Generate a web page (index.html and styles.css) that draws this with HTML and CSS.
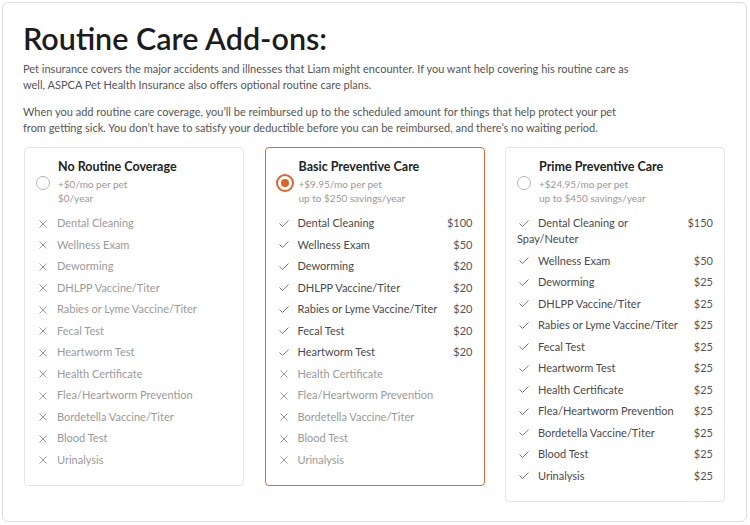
FILE: index.html
```html
<!DOCTYPE html>
<html>
<head>
<meta charset="utf-8">
<link rel="stylesheet" href="styles.css">
</head>
<body>
<div class="page">
  <h1 class="title">Routine Care Add-ons:</h1>
  <p class="intro">Pet insurance covers the major accidents and illnesses that Liam might encounter. If you want help covering his routine care as well, ASPCA Pet Health Insurance also offers optional routine care plans.</p>
  <p class="intro">When you add routine care coverage, you’ll be reimbursed up to the scheduled amount for things that help protect your pet from getting sick. You don’t have to satisfy your deductible before you can be reimbursed, and there’s no waiting period.</p>

  <div class="plans">
    <div class="plan">
      <div class="plan-head">
        <span class="radio"></span>
        <div class="plan-info">
          <div class="plan-name">No Routine Coverage</div>
          <div class="plan-sub">+$0/mo per pet</div>
          <div class="plan-sub">$0/year</div>
        </div>
      </div>
      <ul class="items">
        <li class="item off"><span class="label"><svg class="ic" width="21" height="8" viewBox="0 0 21 8"><path d="M3.5 0.5 L10.5 7.5 M10.5 0.5 L3.5 7.5"/></svg>Dental Cleaning</span></li>
        <li class="item off"><span class="label"><svg class="ic" width="21" height="8" viewBox="0 0 21 8"><path d="M3.5 0.5 L10.5 7.5 M10.5 0.5 L3.5 7.5"/></svg>Wellness Exam</span></li>
        <li class="item off"><span class="label"><svg class="ic" width="21" height="8" viewBox="0 0 21 8"><path d="M3.5 0.5 L10.5 7.5 M10.5 0.5 L3.5 7.5"/></svg>Deworming</span></li>
        <li class="item off"><span class="label"><svg class="ic" width="21" height="8" viewBox="0 0 21 8"><path d="M3.5 0.5 L10.5 7.5 M10.5 0.5 L3.5 7.5"/></svg>DHLPP Vaccine/Titer</span></li>
        <li class="item off"><span class="label"><svg class="ic" width="21" height="8" viewBox="0 0 21 8"><path d="M3.5 0.5 L10.5 7.5 M10.5 0.5 L3.5 7.5"/></svg>Rabies or Lyme Vaccine/Titer</span></li>
        <li class="item off"><span class="label"><svg class="ic" width="21" height="8" viewBox="0 0 21 8"><path d="M3.5 0.5 L10.5 7.5 M10.5 0.5 L3.5 7.5"/></svg>Fecal Test</span></li>
        <li class="item off"><span class="label"><svg class="ic" width="21" height="8" viewBox="0 0 21 8"><path d="M3.5 0.5 L10.5 7.5 M10.5 0.5 L3.5 7.5"/></svg>Heartworm Test</span></li>
        <li class="item off"><span class="label"><svg class="ic" width="21" height="8" viewBox="0 0 21 8"><path d="M3.5 0.5 L10.5 7.5 M10.5 0.5 L3.5 7.5"/></svg>Health Certificate</span></li>
        <li class="item off"><span class="label"><svg class="ic" width="21" height="8" viewBox="0 0 21 8"><path d="M3.5 0.5 L10.5 7.5 M10.5 0.5 L3.5 7.5"/></svg>Flea/Heartworm Prevention</span></li>
        <li class="item off"><span class="label"><svg class="ic" width="21" height="8" viewBox="0 0 21 8"><path d="M3.5 0.5 L10.5 7.5 M10.5 0.5 L3.5 7.5"/></svg>Bordetella Vaccine/Titer</span></li>
        <li class="item off"><span class="label"><svg class="ic" width="21" height="8" viewBox="0 0 21 8"><path d="M3.5 0.5 L10.5 7.5 M10.5 0.5 L3.5 7.5"/></svg>Blood Test</span></li>
        <li class="item off"><span class="label"><svg class="ic" width="21" height="8" viewBox="0 0 21 8"><path d="M3.5 0.5 L10.5 7.5 M10.5 0.5 L3.5 7.5"/></svg>Urinalysis</span></li>
      </ul>
    </div>

    <div class="plan selected">
      <div class="plan-head">
        <span class="radio checked"></span>
        <div class="plan-info">
          <div class="plan-name">Basic Preventive Care</div>
          <div class="plan-sub">+$9.95/mo per pet</div>
          <div class="plan-sub">up to $250 savings/year</div>
        </div>
      </div>
      <ul class="items">
        <li class="item"><span class="label"><svg class="ic" width="21" height="8" viewBox="0 0 21 8"><path d="M2.5 3.5 L5.5 6.5 L11.5 0.5"/></svg>Dental Cleaning</span><span class="price">$100</span></li>
        <li class="item"><span class="label"><svg class="ic" width="21" height="8" viewBox="0 0 21 8"><path d="M2.5 3.5 L5.5 6.5 L11.5 0.5"/></svg>Wellness Exam</span><span class="price">$50</span></li>
        <li class="item"><span class="label"><svg class="ic" width="21" height="8" viewBox="0 0 21 8"><path d="M2.5 3.5 L5.5 6.5 L11.5 0.5"/></svg>Deworming</span><span class="price">$20</span></li>
        <li class="item"><span class="label"><svg class="ic" width="21" height="8" viewBox="0 0 21 8"><path d="M2.5 3.5 L5.5 6.5 L11.5 0.5"/></svg>DHLPP Vaccine/Titer</span><span class="price">$20</span></li>
        <li class="item"><span class="label"><svg class="ic" width="21" height="8" viewBox="0 0 21 8"><path d="M2.5 3.5 L5.5 6.5 L11.5 0.5"/></svg>Rabies or Lyme Vaccine/Titer</span><span class="price">$20</span></li>
        <li class="item"><span class="label"><svg class="ic" width="21" height="8" viewBox="0 0 21 8"><path d="M2.5 3.5 L5.5 6.5 L11.5 0.5"/></svg>Fecal Test</span><span class="price">$20</span></li>
        <li class="item"><span class="label"><svg class="ic" width="21" height="8" viewBox="0 0 21 8"><path d="M2.5 3.5 L5.5 6.5 L11.5 0.5"/></svg>Heartworm Test</span><span class="price">$20</span></li>
        <li class="item off"><span class="label"><svg class="ic" width="21" height="8" viewBox="0 0 21 8"><path d="M3.5 0.5 L10.5 7.5 M10.5 0.5 L3.5 7.5"/></svg>Health Certificate</span></li>
        <li class="item off"><span class="label"><svg class="ic" width="21" height="8" viewBox="0 0 21 8"><path d="M3.5 0.5 L10.5 7.5 M10.5 0.5 L3.5 7.5"/></svg>Flea/Heartworm Prevention</span></li>
        <li class="item off"><span class="label"><svg class="ic" width="21" height="8" viewBox="0 0 21 8"><path d="M3.5 0.5 L10.5 7.5 M10.5 0.5 L3.5 7.5"/></svg>Bordetella Vaccine/Titer</span></li>
        <li class="item off"><span class="label"><svg class="ic" width="21" height="8" viewBox="0 0 21 8"><path d="M3.5 0.5 L10.5 7.5 M10.5 0.5 L3.5 7.5"/></svg>Blood Test</span></li>
        <li class="item off"><span class="label"><svg class="ic" width="21" height="8" viewBox="0 0 21 8"><path d="M3.5 0.5 L10.5 7.5 M10.5 0.5 L3.5 7.5"/></svg>Urinalysis</span></li>
      </ul>
    </div>

    <div class="plan">
      <div class="plan-head">
        <span class="radio"></span>
        <div class="plan-info">
          <div class="plan-name">Prime Preventive Care</div>
          <div class="plan-sub">+$24.95/mo per pet</div>
          <div class="plan-sub">up to $450 savings/year</div>
        </div>
      </div>
      <ul class="items">
        <li class="item"><span class="label narrow"><svg class="ic" width="21" height="8" viewBox="0 0 21 8"><path d="M2.5 3.5 L5.5 6.5 L11.5 0.5"/></svg>Dental Cleaning or Spay/Neuter</span><span class="price">$150</span></li>
        <li class="item"><span class="label"><svg class="ic" width="21" height="8" viewBox="0 0 21 8"><path d="M2.5 3.5 L5.5 6.5 L11.5 0.5"/></svg>Wellness Exam</span><span class="price">$50</span></li>
        <li class="item"><span class="label"><svg class="ic" width="21" height="8" viewBox="0 0 21 8"><path d="M2.5 3.5 L5.5 6.5 L11.5 0.5"/></svg>Deworming</span><span class="price">$25</span></li>
        <li class="item"><span class="label"><svg class="ic" width="21" height="8" viewBox="0 0 21 8"><path d="M2.5 3.5 L5.5 6.5 L11.5 0.5"/></svg>DHLPP Vaccine/Titer</span><span class="price">$25</span></li>
        <li class="item"><span class="label"><svg class="ic" width="21" height="8" viewBox="0 0 21 8"><path d="M2.5 3.5 L5.5 6.5 L11.5 0.5"/></svg>Rabies or Lyme Vaccine/Titer</span><span class="price">$25</span></li>
        <li class="item"><span class="label"><svg class="ic" width="21" height="8" viewBox="0 0 21 8"><path d="M2.5 3.5 L5.5 6.5 L11.5 0.5"/></svg>Fecal Test</span><span class="price">$25</span></li>
        <li class="item"><span class="label"><svg class="ic" width="21" height="8" viewBox="0 0 21 8"><path d="M2.5 3.5 L5.5 6.5 L11.5 0.5"/></svg>Heartworm Test</span><span class="price">$25</span></li>
        <li class="item"><span class="label"><svg class="ic" width="21" height="8" viewBox="0 0 21 8"><path d="M2.5 3.5 L5.5 6.5 L11.5 0.5"/></svg>Health Certificate</span><span class="price">$25</span></li>
        <li class="item"><span class="label"><svg class="ic" width="21" height="8" viewBox="0 0 21 8"><path d="M2.5 3.5 L5.5 6.5 L11.5 0.5"/></svg>Flea/Heartworm Prevention</span><span class="price">$25</span></li>
        <li class="item"><span class="label"><svg class="ic" width="21" height="8" viewBox="0 0 21 8"><path d="M2.5 3.5 L5.5 6.5 L11.5 0.5"/></svg>Bordetella Vaccine/Titer</span><span class="price">$25</span></li>
        <li class="item"><span class="label"><svg class="ic" width="21" height="8" viewBox="0 0 21 8"><path d="M2.5 3.5 L5.5 6.5 L11.5 0.5"/></svg>Blood Test</span><span class="price">$25</span></li>
        <li class="item"><span class="label"><svg class="ic" width="21" height="8" viewBox="0 0 21 8"><path d="M2.5 3.5 L5.5 6.5 L11.5 0.5"/></svg>Urinalysis</span><span class="price">$25</span></li>
      </ul>
    </div>
  </div>
</div>
</body>
</html>
```

FILE: styles.css
```css
* { box-sizing: border-box; }
html, body { margin: 0; padding: 0; background: #fff; }
body { font-family: "Lato", "Open Sans", sans-serif; color: #333; }

.page {
  margin: 2px;
  width: 745px;
  height: 520px;
  border: 1px solid #dedede;
  border-radius: 6px;
  padding: 16px 20px 0 20px;
}

.title {
  margin: 0;
  font-size: 30.5px;
  font-weight: 600;
  line-height: 38px;
  color: #1c1c1c;
}

.intro {
  margin: 4px 0 11px;
  max-width: 610px;
  font-size: 11px;
  line-height: 16px;
  color: #555;
}

.plans {
  display: flex;
  align-items: flex-start;
  gap: 20.5px;
  margin-top: 1px;
  padding-left: 1px;
}

.plan {
  width: 220px;
  border: 1px solid #e6e6e6;
  border-radius: 4px;
  padding: 10px 11px 17px 11px;
}
.plan.selected { border-color: #e06a33; }

.plan-head {
  display: flex;
  align-items: center;
  gap: 8px;
  margin-bottom: 10px;
}

.radio {
  flex: none;
  width: 14px;
  height: 14px;
  border: 1px solid #b5b5b5;
  border-radius: 50%;
  margin-top: 2px;
}
.radio.checked {
  width: 18px;
  height: 18px;
  border: 2px solid #e0622b;
  position: relative;
  margin-left: -1px;
  margin-right: -3px;
}
.radio.checked::after {
  content: "";
  position: absolute;
  left: 3px;
  top: 3px;
  width: 8px;
  height: 8px;
  border-radius: 50%;
  background: #e0622b;
}

.plan-name {
  font-size: 12.5px;
  font-weight: 700;
  color: #222;
  line-height: 18px;
  margin-bottom: 1px;
}
.plan-sub {
  font-size: 10px;
  color: #999;
  line-height: 14px;
}

.items {
  list-style: none;
  margin: 0;
  padding: 0;
  display: flex;
  flex-direction: column;
  gap: 5.5px;
}
.item {
  display: flex;
  justify-content: space-between;
  align-items: flex-start;
  font-size: 11px;
  line-height: 16px;
  color: #4a4a4a;
}
.item.off { color: #9a9a9a; }
.label.narrow { max-width: 120px; }
.ic {
  display: inline-block;
  vertical-align: -0.5px;
  fill: none;
  stroke: #7a7a7a;
  stroke-width: 1;
}
.item.off .ic { stroke: #999; }
.price { color: #555; }
```
